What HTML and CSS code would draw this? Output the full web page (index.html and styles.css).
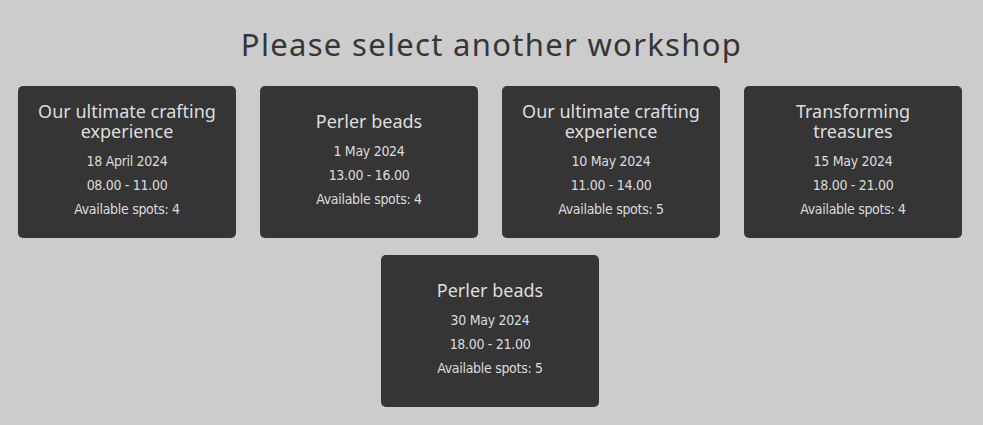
FILE: index.html
```html
<!DOCTYPE html>
<html>
<head>
<meta charset="utf-8">
<link rel="stylesheet" href="styles.css">
</head>
<body>
<main class="page">
  <h1 class="heading">Please select another workshop</h1>
  <div class="cards">
    <div class="card">
      <h2 class="card-title">Our ultimate crafting experience</h2>
      <p class="card-line">18 April 2024</p>
      <p class="card-line">08.00 - 11.00</p>
      <p class="card-line">Available spots: 4</p>
    </div>
    <div class="card">
      <h2 class="card-title">Perler beads</h2>
      <p class="card-line">1 May 2024</p>
      <p class="card-line">13.00 - 16.00</p>
      <p class="card-line">Available spots: 4</p>
    </div>
    <div class="card">
      <h2 class="card-title">Our ultimate crafting experience</h2>
      <p class="card-line">10 May 2024</p>
      <p class="card-line">11.00 - 14.00</p>
      <p class="card-line">Available spots: 5</p>
    </div>
    <div class="card">
      <h2 class="card-title">Transforming treasures</h2>
      <p class="card-line">15 May 2024</p>
      <p class="card-line">18.00 - 21.00</p>
      <p class="card-line">Available spots: 4</p>
    </div>
    <div class="card">
      <h2 class="card-title">Perler beads</h2>
      <p class="card-line">30 May 2024</p>
      <p class="card-line">18.00 - 21.00</p>
      <p class="card-line">Available spots: 5</p>
    </div>
  </div>
</main>
</body>
</html>
```
FILE: styles.css
```css
html, body {
  margin: 0;
  padding: 0;
  background: #cccccc;
}
.page {
  padding-top: 25px;
}
.heading {
  margin: 0 0 23px 0;
  text-align: center;
  font-family: "Noto Sans", sans-serif;
  font-weight: 400;
  font-size: 31px;
  line-height: 38px;
  color: #363636;
  letter-spacing: 1.3px;
}
.cards {
  display: flex;
  flex-wrap: wrap;
  justify-content: center;
  column-gap: 24px;
  row-gap: 17px;
  padding: 0 21px 0 18px;
}
.card {
  width: 218px;
  height: 152px;
  box-sizing: border-box;
  background: #353535;
  border-radius: 5px;
  display: flex;
  flex-direction: column;
  justify-content: center;
  align-items: center;
  padding: 6px 16px 8px;
  color: #dcdcdc;
  text-align: center;
}
.card-title {
  margin: 0 0 8px 0;
  font-family: "Noto Sans", sans-serif;
  font-weight: 400;
  font-size: 18px;
  line-height: 20px;
  color: #dedede;
  max-width: 190px;
}
.card-line {
  margin: 0;
  font-family: "DejaVu Sans Condensed", "DejaVu Sans", sans-serif;
  font-size: 14px;
  line-height: 24px;
  letter-spacing: -0.3px;
  color: #dcdcdc;
}
```
